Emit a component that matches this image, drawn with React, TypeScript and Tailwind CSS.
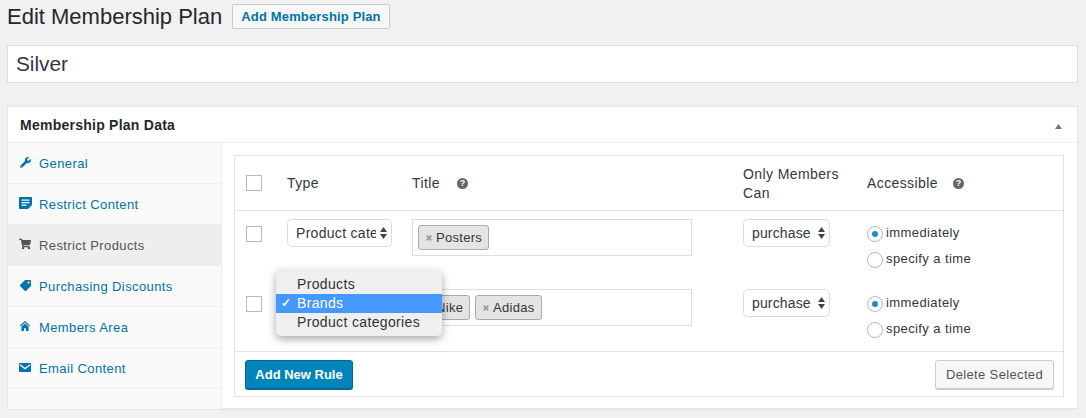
import { FaShoppingCart, FaTag, FaWrench } from "react-icons/fa";
import type { ReactNode } from "react";

const font = "font-['Liberation_Sans',Arial,sans-serif]";

function NoteIcon() {
  return (
    <svg viewBox="0 0 13 12" className="h-3 w-[13px]" fill="currentColor">
      <path d="M1 0h11a1 1 0 0 1 1 1v7l-4 4H1a1 1 0 0 1-1-1V1a1 1 0 0 1 1-1z M2.5 2.5v1.2h8V2.5z M2.5 5v1.2h8V5z M2.5 7.5v1.2h5V7.5z" fillRule="evenodd" />
    </svg>
  );
}

function HomeIcon() {
  return (
    <svg viewBox="0 0 10 10" className="h-[10px] w-[10px]" fill="currentColor">
      <path d="M5 0 10 4.6 9.3 5.4 5 1.5.7 5.4 0 4.6z" />
      <path d="M5 2.6 8.6 5.8V10H6V7.2H4V10H1.4V5.8z" />
    </svg>
  );
}

function MailIcon() {
  return (
    <svg viewBox="0 0 12 9" className="h-[9px] w-3">
      <rect width="12" height="9" rx="0.8" fill="currentColor" />
      <path d="M1 1.8 6 5.6l5-3.8" fill="none" stroke="#fafafa" strokeWidth="1.4" />
    </svg>
  );
}

const tabs: { label: string; icon: ReactNode; active?: boolean }[] = [
  { label: "General", icon: <FaWrench size={11} /> },
  { label: "Restrict Content", icon: <NoteIcon /> },
  { label: "Restrict Products", icon: <FaShoppingCart size={12} />, active: true },
  { label: "Purchasing Discounts", icon: <FaTag size={11} className="-scale-x-100" /> },
  { label: "Members Area", icon: <HomeIcon /> },
  { label: "Email Content", icon: <MailIcon /> },
];

function HelpIcon() {
  return (
    <span className="flex h-[11px] w-[11px] items-center justify-center rounded-full bg-[#666] text-[9px] font-bold leading-none tracking-normal text-white">
      ?
    </span>
  );
}

function Checkbox() {
  return <span className="block h-4 w-4 border border-[#b4b9be] bg-white" />;
}

function Arrows() {
  return (
    <svg viewBox="0 0 7 12" className="h-3 w-[7px] shrink-0" fill="#444">
      <path d="M3.5 0 7 5H0z" />
      <path d="M0 7h7l-3.5 5z" />
    </svg>
  );
}

function SelectBox({ value, width, clip }: { value: string; width: string; clip?: string }) {
  return (
    <div className={`flex h-7 items-center justify-between rounded-[5px] border border-[#ddd] bg-white pl-2 pr-1 text-sm tracking-[0.15px] text-[#32373c] ${width}`}>
      <span className={`overflow-hidden whitespace-nowrap ${clip ?? ""}`}>{value}</span>
      <Arrows />
    </div>
  );
}

function Token({ label, className = "" }: { label: string; className?: string }) {
  return (
    <span className={`flex h-[25px] items-center gap-[4px] rounded-[3px] border border-[#aaa] bg-[#e4e4e4] pl-[7px] pr-[6px] text-[13px] tracking-[0.3px] text-[#32373c] ${className}`}>
      <svg viewBox="0 0 6 6" className="h-[6px] w-[6px] shrink-0" stroke="#999" strokeWidth="1.7">
        <path d="M.7.7l4.6 4.6M5.3.7.7 5.3" />
      </svg>
      {label}
    </span>
  );
}

function Radio({ checked }: { checked?: boolean }) {
  return (
    <span className="flex h-4 w-4 items-center justify-center rounded-full border border-[#b4b9be] bg-white">
      {checked && <span className="h-[6px] w-[6px] rounded-full bg-[#1e8cbe]" />}
    </span>
  );
}

function RuleRow({ type, tokens, clipped }: { type: string; tokens: ReactNode; clipped?: boolean }) {
  return (
    <div className="grid h-[70px] grid-cols-[52px_125px_331px_124px_1fr] pt-2">
      <div className="pl-[11px] pt-[7px]">
        <Checkbox />
      </div>
      <div>{!clipped && <SelectBox value={type} width="w-[105px]" clip="w-[80px] tracking-[0.3px]" />}</div>
      <div className="flex h-[37px] w-[280px] items-start gap-[5px] border border-[#ddd] bg-white pl-[5px] pt-[5px]">
        {tokens}
      </div>
      <div>
        <SelectBox value="purchase" width="w-[87px]" />
      </div>
      <div className="flex flex-col gap-[10px] pt-[7px] text-[13px] leading-4 tracking-[0.4px] text-[#32373c]">
        <label className="flex items-center gap-[3px]">
          <Radio checked />
          <span className="-mt-[2px]">immediately</span>
        </label>
        <label className="flex items-center gap-[3px]">
          <Radio />
          <span className="-mt-[2px]">specify a time</span>
        </label>
      </div>
    </div>
  );
}

export default function App() {
  return (
    <div className={`${font} h-[418px] w-[1086px] overflow-hidden bg-[#f1f1f1] pl-[7px] pr-2 pt-1 text-[#23282d]`}>
      <div className="flex h-[25px] items-center gap-[9px]">
        <h1 className="w-[216px] whitespace-nowrap text-[22px] leading-none text-[#23282d]">Edit Membership Plan</h1>
        <button className="h-[25px] w-[158px] rounded-[2px] border border-[#ccc] bg-[#f7f7f7] text-[13px] font-bold tracking-[0.15px] text-[#0073aa]">
          Add Membership Plan
        </button>
      </div>

      <div className="mt-4 flex h-[38px] items-center border border-[#ddd] bg-white pl-2 text-[20.8px] text-[#32373c]">
        Silver
      </div>

      <div className="relative mt-[23px] h-[303px] border border-[#e5e5e5] bg-white shadow-[0_1px_1px_rgba(0,0,0,0.04)]">
        <div className="flex h-[36px] items-center justify-between border-b border-[#eee] pl-3 pr-[15px] pt-[2px] text-[14px] font-bold tracking-[0.25px] text-[#23282d]">
          Membership Plan Data
          <svg viewBox="0 0 7 5" className="h-[5px] w-[7px] translate-y-[1px]" fill="#72777c">
            <path d="M3.5 0 7 5H0z" />
          </svg>
        </div>

        <div className="flex">
          <nav className="h-[266px] w-[214px] border-r border-[#eee] bg-[#fafafa]">
            {tabs.map((t) => (
              <div
                key={t.label}
                className={`flex h-[41px] items-center border-b border-[#eee] pt-[2px] text-[13px] tracking-[0.4px] ${t.active ? "bg-[#eee] text-[#555]" : "text-[#0073aa]"}`}
              >
                <span className="flex w-[31px] -translate-y-[2px] justify-center pl-[3px]">{t.icon}</span>
                {t.label}
              </div>
            ))}
          </nav>

          <div className="ml-3 mt-3 h-[242px] w-[830px] border border-[#e1e1e1] bg-white">
            <div className="grid h-[55px] grid-cols-[52px_125px_331px_124px_1fr] items-center border-b border-[#e1e1e1] text-[14px] tracking-[0.4px] text-[#32373c]">
              <div className="pl-[11px]">
                <Checkbox />
              </div>
              <div>Type</div>
              <div className="flex items-center gap-[17px]">
                Title
                <HelpIcon />
              </div>
              <div className="pt-[2px] leading-[19px]">
                Only Members
                <br />
                Can
              </div>
              <div className="flex items-center gap-[15px]">
                Accessible
                <HelpIcon />
              </div>
            </div>

            <RuleRow type="Product categories" tokens={<Token label="Posters" />} />
            <RuleRow
              type="Brands"
              clipped
              tokens={
                <>
                  <Token label="Nike" className="w-[52px]" />
                  <Token label="Adidas" />
                </>
              }
            />

            <div className="flex h-[45px] items-start justify-between border-t border-[#e1e1e1] pl-[10px] pr-[9px] pt-2">
              <button className="h-[29px] w-[108px] rounded-[3px] border border-[#006799] bg-[#0085ba] text-[13px] font-bold text-white shadow-[0_1px_0_#006799]">
                Add New Rule
              </button>
              <button className="h-[29px] w-[119px] rounded-[3px] border border-[#ccc] bg-[#f7f7f7] text-[13px] tracking-[0.35px] text-[#555] shadow-[0_1px_0_#ccc]">
                Delete Selected
              </button>
            </div>
          </div>
        </div>

        <div className="absolute left-[268px] top-[163px] h-[66px] w-[166px] rounded-[5px] bg-[#efefef] py-[5px] text-[14px] leading-[19px] tracking-[0.35px] text-[#333] shadow-[0_3px_9px_rgba(0,0,0,0.35)]">
          <div className="pl-[21px]">Products</div>
          <div className="relative bg-[#4598fd] pl-[21px] text-white">
            <span className="absolute left-[5px] text-[12px] font-bold">✓</span>
            Brands
          </div>
          <div className="pl-[21px]">Product categories</div>
        </div>
      </div>
    </div>
  );
}
